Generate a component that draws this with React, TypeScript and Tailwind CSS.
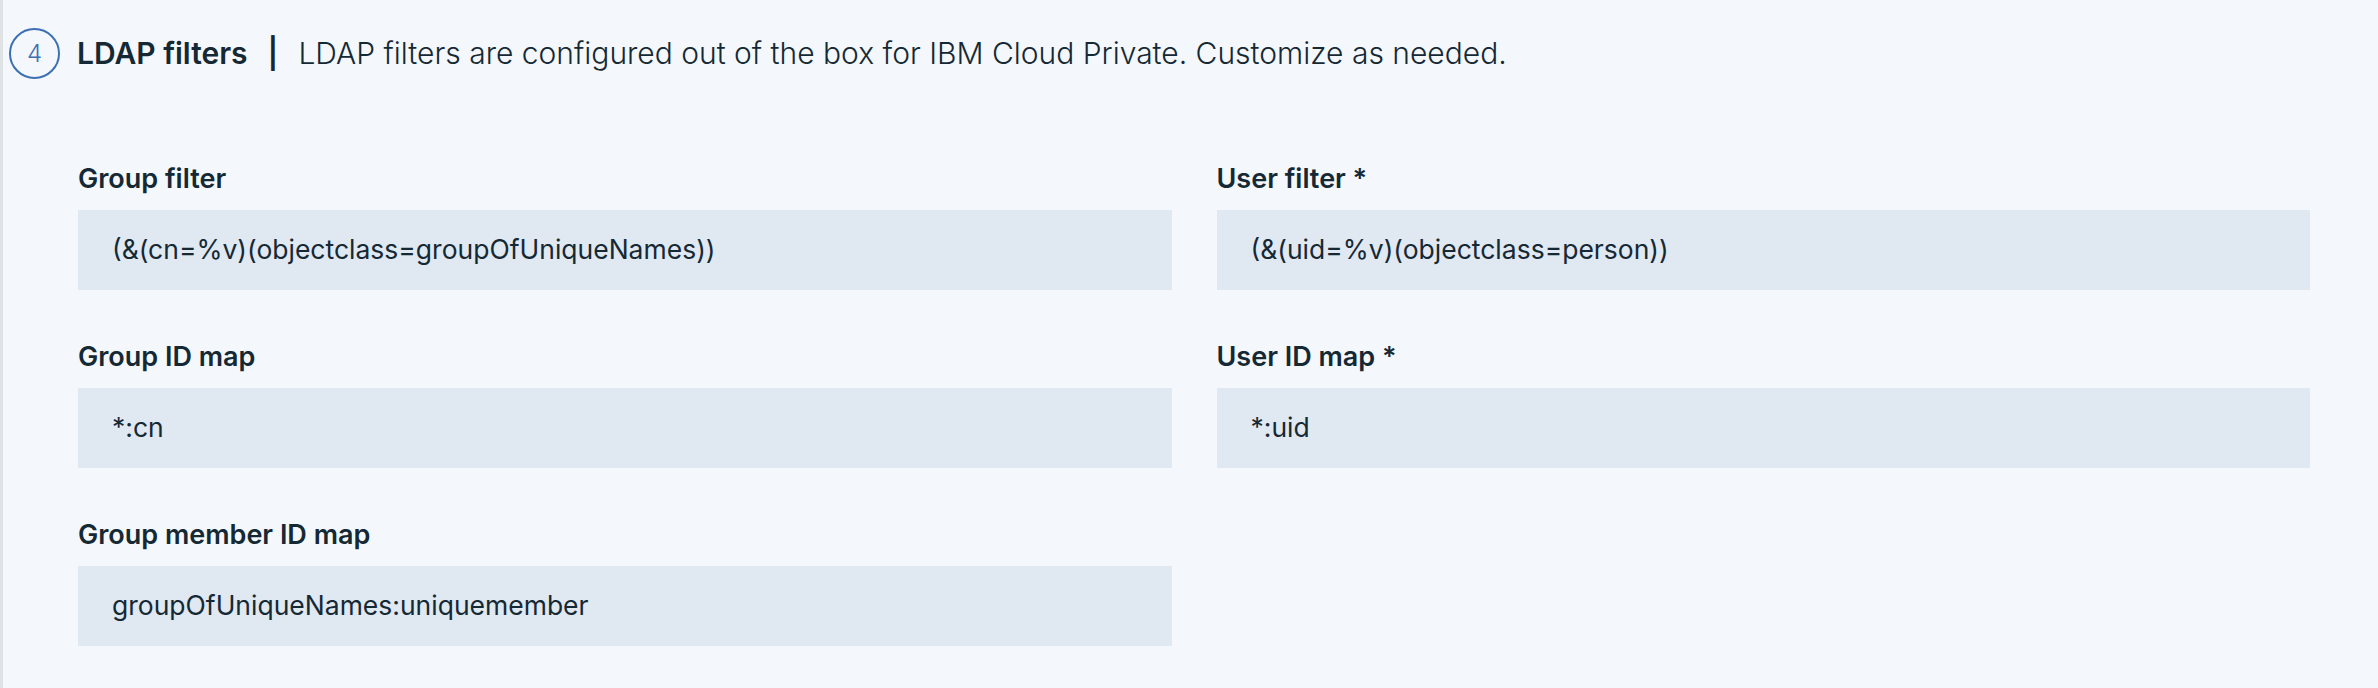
const fields = [
  { label: 'Group filter', value: '(&(cn=%v)(objectclass=groupOfUniqueNames))' },
  { label: 'User filter *', value: '(&(uid=%v)(objectclass=person))' },
  { label: 'Group ID map', value: '*:cn' },
  { label: 'User ID map *', value: '*:uid' },
  { label: 'Group member ID map', value: 'groupOfUniqueNames:uniquemember' },
];

const Field = ({ label, value }: { label: string; value: string }) => (
  <div className="flex flex-col">
    <label className="text-[27px] leading-[36px] font-semibold text-[#152935]">
      {label}
    </label>
    <div className="mt-[13px] h-[80px] bg-[#e0e8f2] flex items-center pl-[34px] text-[26.5px] text-[#152935]">
      {value}
    </div>
  </div>
);

export default function App() {
  return (
    <div className="min-h-[688px] bg-[#f4f7fb] border-l-[3px] border-[#dfe3e6] font-['Inter',sans-serif]">
      <div className="flex items-center pt-[28px] pl-[6px]">
        <div className="size-[51px] rounded-full border-2 border-[#3d70b2] flex items-center justify-center text-[24px] font-light text-[#3d70b2]">
          4
        </div>
        <h2 className="ml-[17px] text-[30px] font-semibold text-[#152935]">
          LDAP filters
        </h2>
        <span className="mx-[20px] text-[30px] font-semibold text-[#152935]">|</span>
        <p className="text-[30px] font-light text-[#152935]">
          LDAP filters are configured out of the box for IBM Cloud Private. Customize as needed.
        </p>
      </div>

      <div className="grid grid-cols-2 gap-x-[45px] gap-y-[49px] pl-[75px] pr-[68px] pt-[82px] pb-[42px]">
        {fields.map((f) => (
          <Field key={f.label} label={f.label} value={f.value} />
        ))}
      </div>
    </div>
  );
}
